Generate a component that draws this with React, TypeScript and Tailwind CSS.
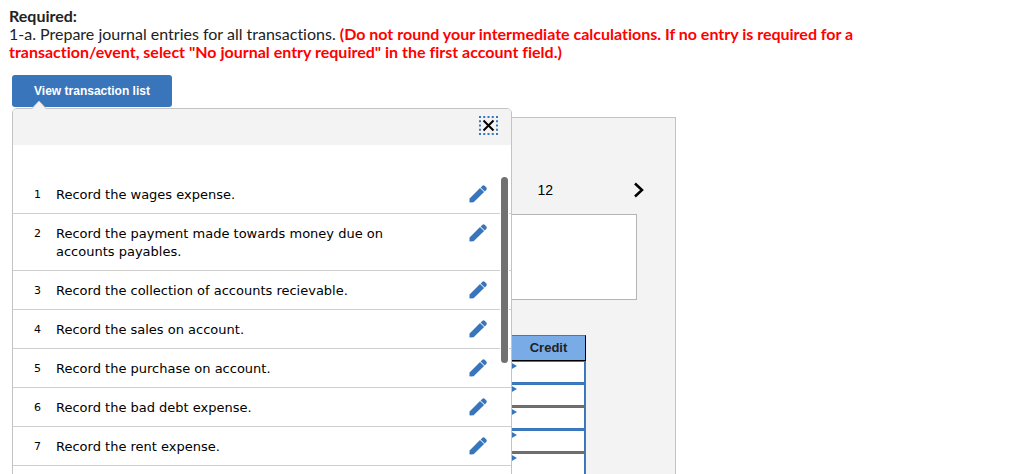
import React from 'react';

interface Transaction {
  id: number;
  text: string;
}

const transactions: Transaction[] = [
  { id: 1, text: 'Record the wages expense.' },
  { id: 2, text: 'Record the payment made towards money due on accounts payables.' },
  { id: 3, text: 'Record the collection of accounts recievable.' },
  { id: 4, text: 'Record the sales on account.' },
  { id: 5, text: 'Record the purchase on account.' },
  { id: 6, text: 'Record the bad debt expense.' },
  { id: 7, text: 'Record the rent expense.' },
];

const journalRows = [1, 2, 3, 4, 5];

const PencilIcon: React.FC = () => (
  <svg width="18" height="18" viewBox="0 0 18 18" fill="#3975bb" aria-hidden="true">
    <path d="M0.4 16.4 L0.6 13.4 L11 3 L15.1 7 L4.6 17.2 L1.3 17.4 Q0.4 17.3 0.4 16.4 Z" />
    <path d="M11.6 2.4 L13.2 0.9 Q14.6 -0.2 15.9 0.9 L17.2 2.2 Q18.3 3.6 17.2 4.9 L15.7 6.4 Z" />
  </svg>
);

const TransactionPopover: React.FC = () => (
  <div className="absolute top-full left-0 z-10 mt-px w-[500px] rounded-t-[5px] border border-[#c3c3c3] bg-white">
    <svg className="absolute -top-[9px] left-[18px]" width="16" height="10" viewBox="0 0 16 10" aria-hidden="true">
      <path d="M0.5 9 L8 1 L15.5 9 L15.5 10 L0.5 10 Z" fill="#f3f3f3" />
      <path d="M0.5 9 L8 1 L15.5 9" fill="none" stroke="#c3c3c3" />
    </svg>
    <div className="flex h-9 items-start justify-end rounded-t-[4px] bg-[#f3f3f3] pt-[7px] pr-[13px]">
      <button type="button" aria-label="Close">
        <svg width="19" height="19" viewBox="0 0 19 19" fill="none" strokeWidth="2" aria-hidden="true">
          <rect x="1" y="1" width="17" height="17" stroke="#3975bb" strokeDasharray="2 2.25" strokeDashoffset="1" />
          <path d="M4.5 4.5 L14.5 14.5 M14.5 4.5 L4.5 14.5" stroke="#000" />
        </svg>
      </button>
    </div>
    <ol className="pt-[30px] pb-8 font-['DejaVu_Sans',sans-serif] text-black">
      {transactions.map((item) => (
        <li
          key={item.id}
          className="flex items-start border-b border-[#cfcfcf] pt-[11px] pr-6 pb-[9px] pl-[21px] text-[13px] leading-[18px]"
        >
          <span className="w-[22px] text-[11px]">{item.id}</span>
          <span className="w-[360px]">{item.text}</span>
          <button type="button" aria-label={`Edit transaction ${item.id}`} className="-mt-px ml-auto">
            <PencilIcon />
          </button>
        </li>
      ))}
    </ol>
    <div className="absolute top-[67px] right-[2px] h-[188px] w-[9px] border border-white bg-white">
      <div className="h-full rounded-full bg-[#717171]" />
    </div>
  </div>
);

const JournalTable: React.FC = () => (
  <table className="mt-[35px] w-[535px] border-separate border-spacing-0">
    <thead>
      <tr className="h-[26px]">
        <th className="border border-black bg-[#79ace6]" />
        <th className="w-[75px] border border-t-[#6f6f6f] border-r-black border-b-black border-l-black bg-[#79ace6] p-0 text-[13px] leading-6 font-bold text-[#222]">
          Credit
        </th>
      </tr>
    </thead>
    <tbody>
      {journalRows.map((row) => (
        <tr key={row}>
          <td className="border-r border-b border-[#717171] bg-white p-0" />
          <td className="relative border-r border-b border-[#717171] bg-white p-0">
            <input
              type="text"
              aria-label={`Credit, line ${row}`}
              className="block h-[22px] w-full border border-[#3975bb] bg-white px-2 text-[13px]"
            />
            <svg className="absolute top-px left-0" width="6" height="8" viewBox="0 0 6 8" fill="#3975bb" aria-hidden="true">
              <path d="M0 0.5 L6 4 L0 7.5 Z" />
            </svg>
          </td>
        </tr>
      ))}
    </tbody>
  </table>
);

const App: React.FC = () => {
  return (
    <main className="h-screen overflow-hidden bg-white pt-[7px] font-['Liberation_Sans',Arial,sans-serif] text-[#222]">
      <div className="max-w-[880px] px-[9px] font-[Lato,sans-serif] text-[16px] leading-[18px] [font-variant-ligatures:none]">
        <h1 className="font-bold">Required:</h1>
        <p>
          1-a. Prepare journal entries for all transactions.{' '}
          <strong className="font-bold text-[#f00]">
            (Do not round your intermediate calculations. If no entry is required for a transaction/event, select "No
            journal entry required" in the first account field.)
          </strong>
        </p>
      </div>

      <div className="px-3 pt-[14px]">
        <div className="relative w-fit">
          <button
            type="button"
            aria-expanded="true"
            className="block h-8 w-40 rounded-[3px] bg-[#3975bb] text-[12px] font-bold text-white"
          >
            View transaction list
          </button>
          <TransactionPopover />
        </div>

        <section className="mt-[10px] min-h-screen max-w-[664px] border border-[#c3c3c3] bg-[#f3f3f3] pr-[30px] pl-[38px] pt-[60px] text-black">
          <div className="flex h-6 items-center justify-end gap-20 text-[14px]">
            <button type="button">12</button>
            <button type="button" aria-label="Next entry">
              <svg width="12" height="16" viewBox="0 0 12 16" fill="none" stroke="#000" strokeWidth="2.5" aria-hidden="true">
                <path d="M2 1.5 L9 8 L2 14.5" />
              </svg>
            </button>
          </div>
          <div className="mt-3 mr-2 h-[86px] border border-[#b4b4b4] bg-white" />
          <JournalTable />
        </section>
      </div>
    </main>
  );
};

export default App;
